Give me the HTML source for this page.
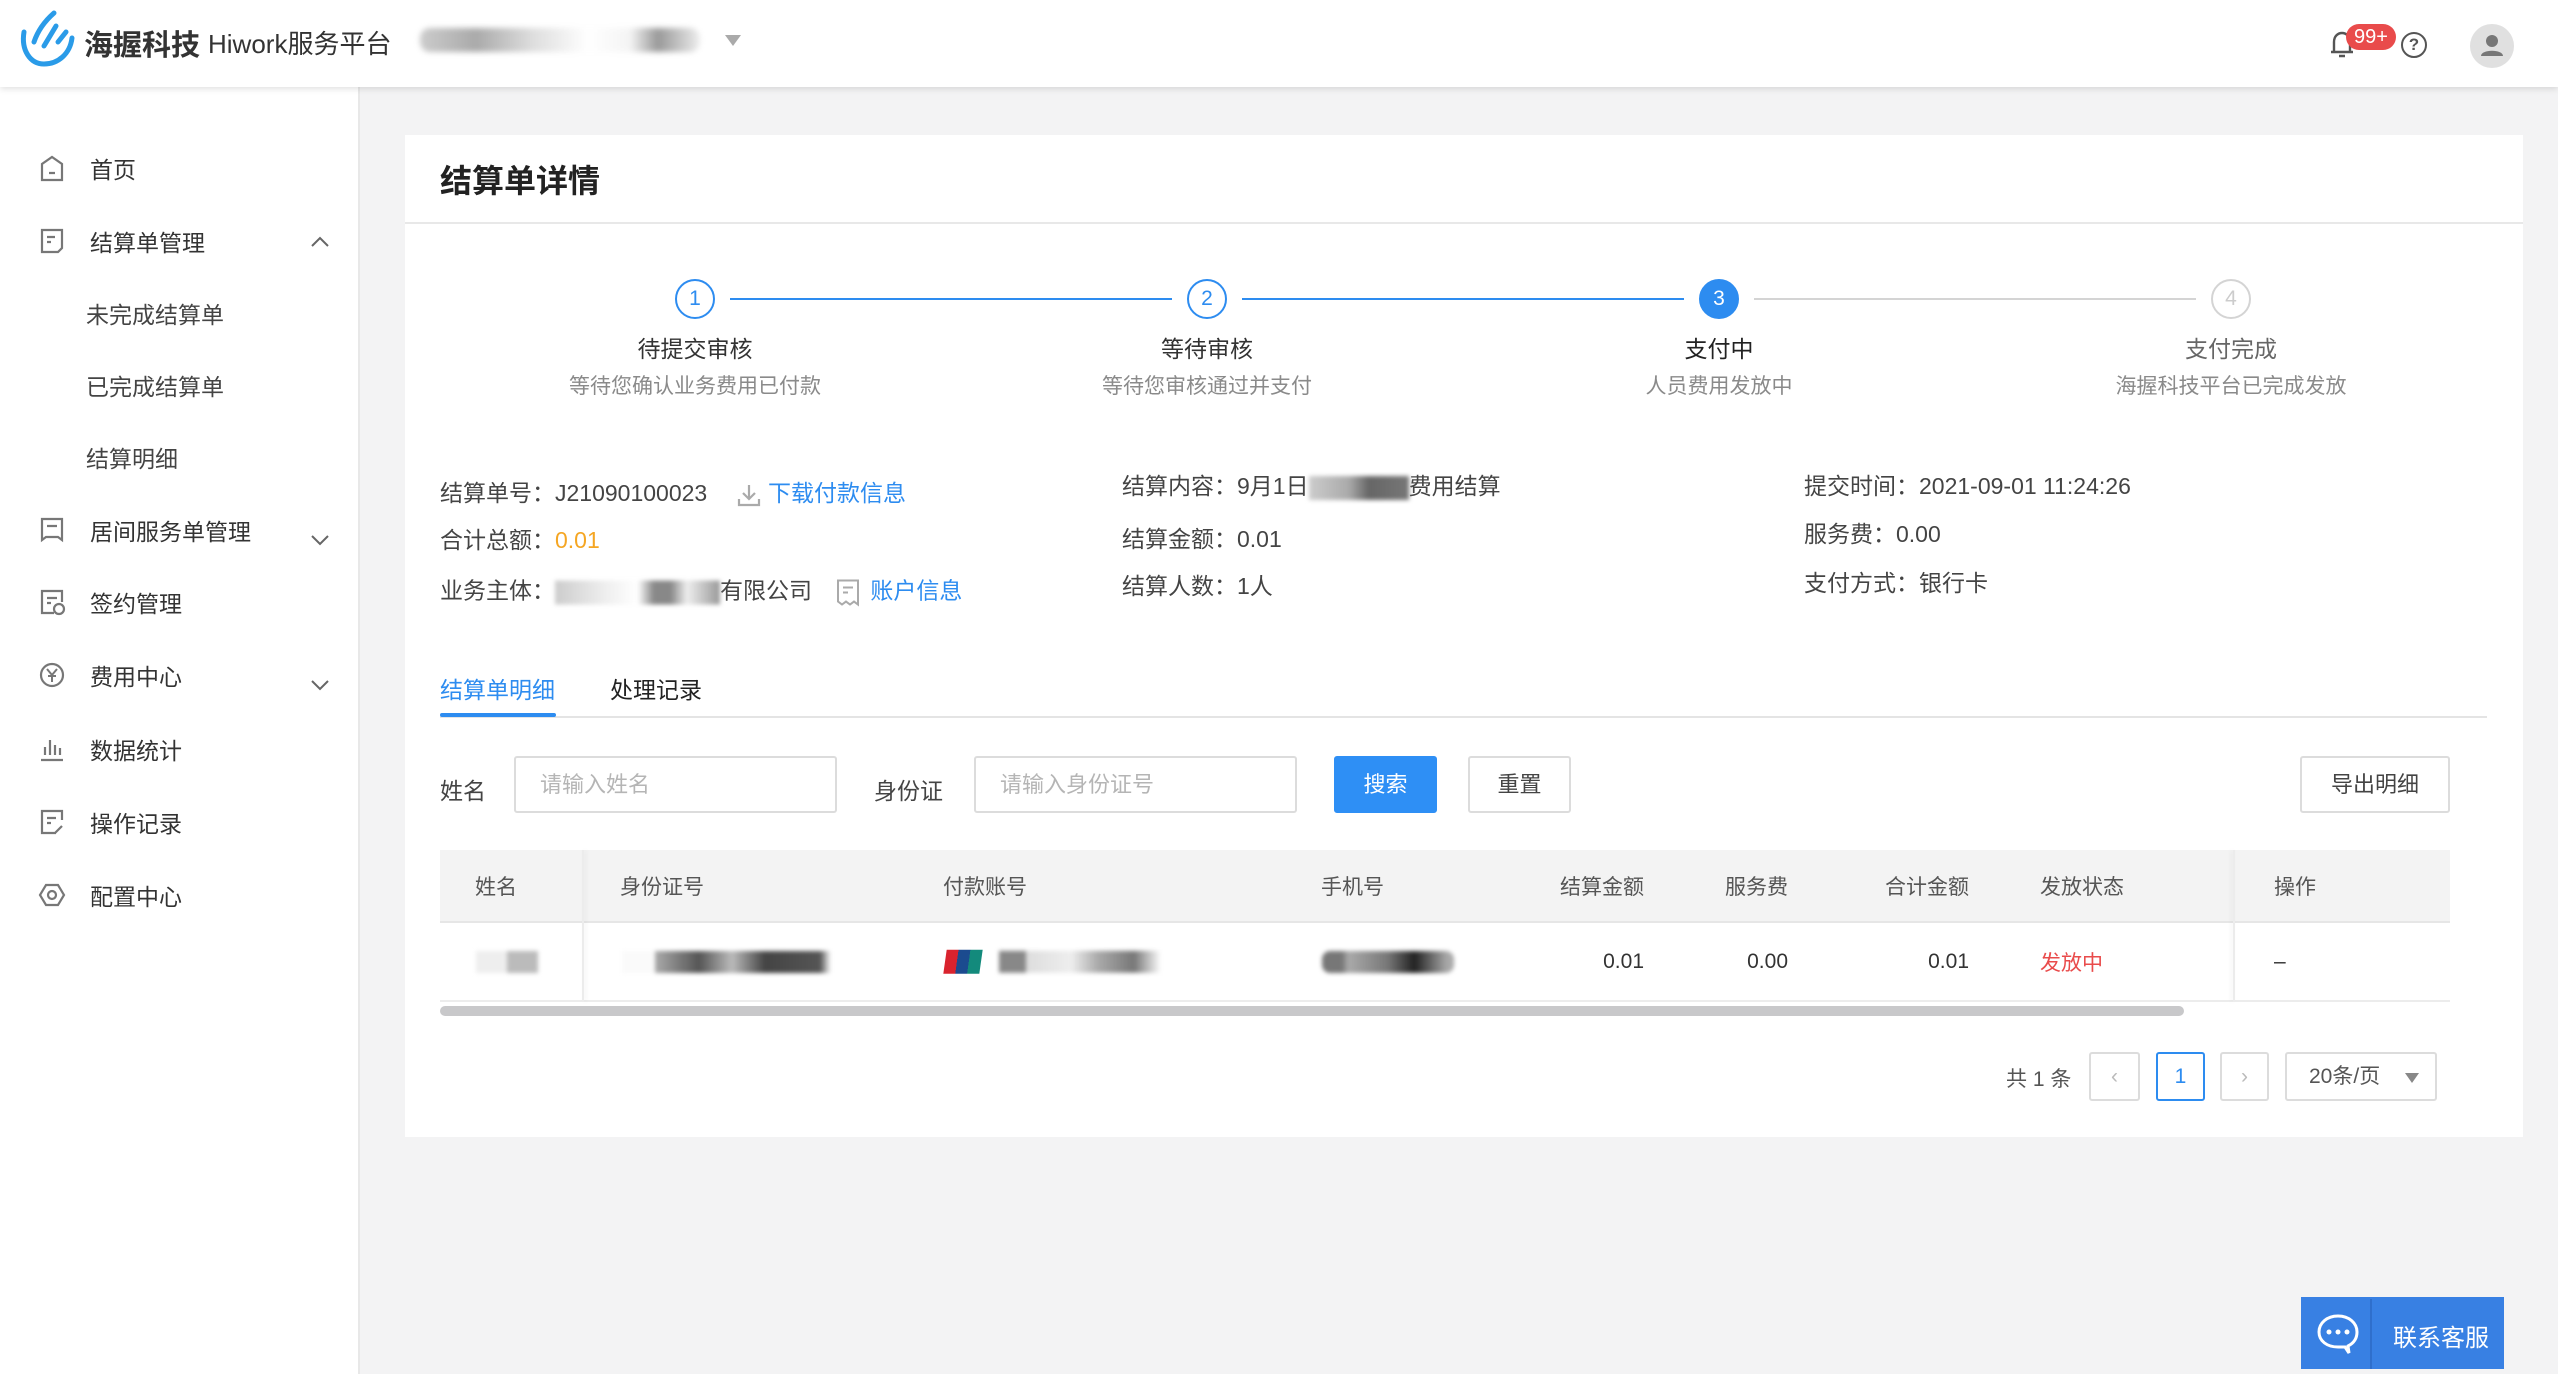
<!DOCTYPE html>
<html><head><meta charset="utf-8"><style>
*{margin:0;padding:0;box-sizing:border-box}
body{width:2558px;height:1374px;background:#f3f3f4;font-family:"Liberation Sans","Noto Sans CJK SC",sans-serif;color:#333;position:relative;overflow:hidden;font-size:23px}
.a{position:absolute;white-space:nowrap}
.hdr{position:absolute;left:0;top:0;width:2558px;height:87px;background:#fff;box-shadow:0 2px 6px rgba(0,0,0,.12);z-index:2}
.side{position:absolute;left:0;top:87px;width:360px;height:1287px;background:#fff;border-right:2px solid #e8e8e8}
.mi{position:absolute;left:90px;font-size:23px;color:#333;transform:translateY(-50%)}
.sub{left:86px;color:#444}
.ic{position:absolute;left:38px;transform:translateY(-50%)}
.card{position:absolute;left:405px;top:135px;width:2118px;height:1002px;background:#fff}
.circ{position:absolute;width:40px;height:40px;border-radius:50%;border:2px solid #2d8cf0;color:#2d8cf0;font-size:21px;text-align:center;line-height:36px;transform:translate(-50%,-50%)}
.ln{position:absolute;height:2px;background:#2d8cf0}
.st{position:absolute;transform:translateX(-50%);text-align:center;white-space:nowrap}
.st b{display:block;font-weight:normal;font-size:23px;color:#333}
.st i{display:block;font-style:normal;font-size:21px;color:#8a8a8a;margin-top:6px}
.inf{position:absolute;font-size:23px;color:#444;transform:translateY(-50%);white-space:nowrap}
.blur{display:inline-block;vertical-align:middle;filter:blur(2px)}
.inp{position:absolute;height:57px;border:2px solid #dcdcdc;border-radius:3px;color:#b5b5b5;font-size:22px;line-height:53px;padding-left:24px}
.btn{position:absolute;height:57px;border:2px solid #dcdcdc;border-radius:3px;font-size:22px;line-height:53px;text-align:center;color:#444;background:#fff}
.th{position:absolute;top:886px;transform:translateY(-50%);color:#555;font-size:21px;white-space:nowrap}
.td{position:absolute;top:962px;transform:translateY(-50%);color:#333;font-size:21px;white-space:nowrap}
.pg{position:absolute;top:1052px;height:49px;border:2px solid #dcdcdc;border-radius:3px;text-align:center;line-height:45px;color:#bbb;font-size:21px;background:#fff}
</style></head><body>
<div class="hdr">
 <svg class="a" style="left:18px;top:10px" width="58" height="58" viewBox="0 0 58 58"><path d="M6 22 C3 40 12 54 26 54 C40 54 52 44 54 28" stroke="#2a9be8" stroke-width="5" fill="none" stroke-linecap="round"/><path d="M16 32 C20 20 28 10 36 3 M26 36 L38 16 M40 32 L48 22" stroke="#2a9be8" stroke-width="5" fill="none" stroke-linecap="round"/></svg>
 <div class="a" style="left:84px;top:22px;font-size:29px;font-weight:bold;color:#333">海握科技</div>
 <div class="a" style="left:208px;top:24px;font-size:26px;color:#333">Hiwork服务平台</div>
 <div class="a" style="left:420px;top:28px;width:280px;height:24px;background:linear-gradient(90deg,#ccc,#aaa 20%,#ddd 40%,#fff 60%,#f4f4f4 75%,#999 85%,#eee);filter:blur(3px);border-radius:10px"></div>
 <div class="a" style="left:725px;top:35px;width:0;height:0;border-left:8px solid transparent;border-right:8px solid transparent;border-top:11px solid #aaa"></div>
 <svg class="a" style="left:2328px;top:28px" width="28" height="32" viewBox="0 0 28 32"><path d="M6 24 V14 C6 8 10 5 14 5 C18 5 22 8 22 14 V24 Z M3 24 H25 M11 28 H17" stroke="#555" stroke-width="2.4" fill="none"/></svg>
 <div class="a" style="left:2346px;top:24px;width:50px;height:26px;background:#e94b4b;border-radius:13px;color:#fff;font-size:20px;text-align:center;line-height:26px">99+</div>
 <div class="a" style="left:2401px;top:32px;width:26px;height:26px;border:2.5px solid #555;border-radius:50%;color:#555;font-size:17px;font-weight:bold;text-align:center;line-height:21px">?</div>
 <div class="a" style="left:2470px;top:24px;width:44px;height:44px;border-radius:50%;background:#e0e0e0"><svg width="44" height="44" viewBox="0 0 44 44"><circle cx="22" cy="17" r="6" fill="#777"/><path d="M11 32 C11 25 33 25 33 32 Z" fill="#777"/></svg></div>
</div>
<div class="side">
 <svg class="ic" style="top:81px" width="28" height="28" viewBox="0 0 28 28"><path d="M4 26 V10 L14 3 L24 10 V26 Z M11 19 H17" stroke="#777" stroke-width="2.2" fill="none"/></svg>
 <div class="mi" style="top:81px">首页</div>
 <svg class="ic" style="top:154px" width="28" height="28" viewBox="0 0 28 28"><path d="M4 3 H24 V21 L20 25 H4 Z M9 10 H17 M9 15 H13" stroke="#777" stroke-width="2.2" fill="none"/></svg>
 <div class="mi" style="top:154px">结算单管理</div>
 <svg class="a" style="left:310px;top:148px" width="20" height="14"><path d="M2 11 L10 3 L18 11" stroke="#666" stroke-width="2" fill="none"/></svg>
 <div class="mi sub" style="top:226px">未完成结算单</div>
 <div class="mi sub" style="top:298px">已完成结算单</div>
 <div class="mi sub" style="top:370px">结算明细</div>
 <svg class="ic" style="top:443px" width="28" height="28" viewBox="0 0 28 28"><path d="M4 3 H24 V24 L20 21 H8 L4 24 Z M9 10 H19" stroke="#777" stroke-width="2.2" fill="none"/></svg>
 <div class="mi" style="top:443px">居间服务单管理</div>
 <svg class="a" style="left:310px;top:446px" width="20" height="14"><path d="M2 3 L10 11 L18 3" stroke="#666" stroke-width="2" fill="none"/></svg>
 <svg class="ic" style="top:515px" width="28" height="28" viewBox="0 0 28 28"><path d="M16 25 H4 V3 H24 V14 M9 10 H19 M9 15 H13" stroke="#777" stroke-width="2.2" fill="none"/><circle cx="21" cy="21" r="5" stroke="#777" stroke-width="2.2" fill="none"/></svg>
 <div class="mi" style="top:515px">签约管理</div>
 <svg class="ic" style="top:588px" width="28" height="28" viewBox="0 0 28 28"><circle cx="14" cy="14" r="11" stroke="#777" stroke-width="2.2" fill="none"/><path d="M9 8 L14 14 L19 8 M14 14 V21 M10 15 H18" stroke="#777" stroke-width="2" fill="none"/></svg>
 <div class="mi" style="top:588px">费用中心</div>
 <svg class="a" style="left:310px;top:591px" width="20" height="14"><path d="M2 3 L10 11 L18 3" stroke="#666" stroke-width="2" fill="none"/></svg>
 <svg class="ic" style="top:662px" width="28" height="28" viewBox="0 0 28 28"><path d="M3 25 H25 M7 20 V12 M12 20 V5 M17 20 V10 M22 20 V13" stroke="#777" stroke-width="2.2" fill="none"/></svg>
 <div class="mi" style="top:662px">数据统计</div>
 <svg class="ic" style="top:735px" width="28" height="28" viewBox="0 0 28 28"><path d="M18 25 H4 V3 H24 V12 M9 10 H18 M9 15 H13 M17 25 L24 18" stroke="#777" stroke-width="2.2" fill="none"/></svg>
 <div class="mi" style="top:735px">操作记录</div>
 <svg class="ic" style="top:808px" width="28" height="28" viewBox="0 0 28 28"><path d="M8 4 H20 L26 14 L20 24 H8 L2 14 Z" stroke="#777" stroke-width="2.2" fill="none"/><circle cx="14" cy="14" r="4" stroke="#777" stroke-width="2.2" fill="none"/></svg>
 <div class="mi" style="top:808px">配置中心</div>
</div>

<div class="card"></div>
<div class="a" style="left:440px;top:156px;font-size:32px;font-weight:bold;color:#222">结算单详情</div>
<div class="a" style="left:405px;top:222px;width:2118px;height:2px;background:#e8e8e8"></div>

<div class="ln" style="left:730px;top:298px;width:442px"></div>
<div class="ln" style="left:1242px;top:298px;width:442px"></div>
<div class="ln" style="left:1754px;top:298px;width:442px;background:#d4d4d4"></div>
<div class="circ" style="left:695px;top:299px">1</div>
<div class="circ" style="left:1207px;top:299px">2</div>
<div class="circ" style="left:1719px;top:299px;background:#2d8cf0;color:#fff">3</div>
<div class="circ" style="left:2231px;top:299px;border-color:#d4d4d4;color:#ccc">4</div>
<div class="st" style="left:695px;top:330px"><b>待提交审核</b><i>等待您确认业务费用已付款</i></div>
<div class="st" style="left:1207px;top:330px"><b>等待审核</b><i>等待您审核通过并支付</i></div>
<div class="st" style="left:1719px;top:330px"><b style="color:#222">支付中</b><i>人员费用发放中</i></div>
<div class="st" style="left:2231px;top:330px"><b style="color:#666">支付完成</b><i>海握科技平台已完成发放</i></div>

<div class="inf" style="left:440px;top:491px">结算单号：J21090100023 <svg style="vertical-align:middle;margin-left:22px" width="26" height="26" viewBox="0 0 26 26"><path d="M13 3 V17 M7 11 L13 17 L19 11 M3 17 V23 H23 V17" stroke="#aaa" stroke-width="2.2" fill="none"/></svg> <span style="color:#2d8cf0">下载付款信息</span></div>
<div class="inf" style="left:440px;top:538px">合计总额：<span style="color:#f5a623">0.01</span></div>
<div class="inf" style="left:440px;top:589px">业务主体：<span class="blur" style="width:165px;height:24px;background:linear-gradient(90deg,#ccc,#eee 30%,#fff 50%,#888 60%,#888 70%,#eee 80%,#999)"></span>有限公司 <svg style="vertical-align:middle;margin:0 10px 0 18px" width="24" height="28" viewBox="0 0 24 28"><path d="M2 2 H22 V26 L18 23 L14 26 L10 23 L6 26 L2 23 Z M7 9 H17 M7 14 H12" stroke="#aaa" stroke-width="2" fill="none"/></svg><span style="color:#2d8cf0">账户信息</span></div>
<div class="inf" style="left:1122px;top:484px">结算内容：9月1日<span class="blur" style="width:100px;height:24px;background:linear-gradient(90deg,#ccc,#aaa 40%,#666 60%,#777)"></span>费用结算</div>
<div class="inf" style="left:1122px;top:537px">结算金额：0.01</div>
<div class="inf" style="left:1122px;top:584px">结算人数：1人</div>
<div class="inf" style="left:1804px;top:484px">提交时间：2021-09-01 11:24:26</div>
<div class="inf" style="left:1804px;top:532px">服务费：0.00</div>
<div class="inf" style="left:1804px;top:581px">支付方式：银行卡</div>

<div class="a" style="left:440px;top:671px;font-size:23px;color:#2d8cf0">结算单明细</div>
<div class="a" style="left:610px;top:671px;font-size:23px;color:#222">处理记录</div>
<div class="a" style="left:440px;top:716px;width:2047px;height:2px;background:#e4e4e4"></div>
<div class="a" style="left:440px;top:713px;width:116px;height:4px;background:#2d8cf0;border-radius:2px"></div>

<div class="a" style="left:440px;top:772px;font-size:23px;color:#444">姓名</div>
<div class="inp" style="left:514px;top:756px;width:323px">请输入姓名</div>
<div class="a" style="left:874px;top:772px;font-size:23px;color:#444">身份证</div>
<div class="inp" style="left:974px;top:756px;width:323px">请输入身份证号</div>
<div class="btn" style="left:1334px;top:756px;width:103px;background:#2e8ff5;border-color:#2e8ff5;color:#fff">搜索</div>
<div class="btn" style="left:1468px;top:756px;width:103px">重置</div>
<div class="btn" style="left:2300px;top:756px;width:150px">导出明细</div>

<div class="a" style="left:440px;top:850px;width:2010px;height:73px;background:#f3f3f3;border-bottom:2px solid #e6e6e6"></div>
<div class="a" style="left:440px;top:1000px;width:2010px;height:2px;background:#ececec"></div>
<div class="a" style="left:582px;top:850px;width:2px;height:152px;background:#ececec;box-shadow:2px 0 4px rgba(0,0,0,.06)"></div>
<div class="a" style="left:2233px;top:850px;width:2px;height:152px;background:#ececec;box-shadow:-2px 0 4px rgba(0,0,0,.06)"></div>
<div class="a" style="left:440px;top:1006px;width:1744px;height:10px;background:#c8c8ca;border-radius:5px"></div>
<div class="th" style="left:475px">姓名</div>
<div class="th" style="left:620px">身份证号</div>
<div class="th" style="left:943px">付款账号</div>
<div class="th" style="left:1321px">手机号</div>
<div class="th" style="left:1644px;transform:translate(-100%,-50%)">结算金额</div>
<div class="th" style="left:1788px;transform:translate(-100%,-50%)">服务费</div>
<div class="th" style="left:1969px;transform:translate(-100%,-50%)">合计金额</div>
<div class="th" style="left:2040px">发放状态</div>
<div class="th" style="left:2274px">操作</div>
<div class="td" style="left:476px"><span class="blur" style="width:62px;height:22px;background:linear-gradient(90deg,#eee 50%,#bbb 50%)"></span></div>
<div class="td" style="left:622px"><span class="blur" style="width:220px;height:22px;background:linear-gradient(90deg,#fafafa 15%,#aaa 15%,#555 35%,#bbb 50%,#444 65%,#555 90%,#fff 95%)"></span></div>
<div class="td" style="left:945px"><span style="display:inline-block;width:36px;height:24px;vertical-align:middle;background:linear-gradient(90deg,#d9232e 33%,#1b4b8f 33%,#1b4b8f 66%,#138a7c 66%);transform:skewX(-8deg);margin-right:18px"></span><span class="blur" style="width:180px;height:22px;background:linear-gradient(90deg,#888 15%,#ddd 15%,#eee 40%,#aaa 55%,#777 75%,#fff 90%)"></span></div>
<div class="td" style="left:1322px"><span class="blur" style="width:132px;height:22px;background:linear-gradient(90deg,#777 15%,#aaa 20%,#777 50%,#222 70%,#aaa 95%);border-radius:8px"></span></div>
<div class="td" style="left:1644px;transform:translate(-100%,-50%)">0.01</div>
<div class="td" style="left:1788px;transform:translate(-100%,-50%)">0.00</div>
<div class="td" style="left:1969px;transform:translate(-100%,-50%)">0.01</div>
<div class="td" style="left:2040px;color:#e94b4b">发放中</div>
<div class="td" style="left:2274px">–</div>

<div class="a" style="left:2006px;top:1063px;font-size:21px;color:#555">共 1 条</div>
<div class="pg" style="left:2089px;width:51px">‹</div>
<div class="pg" style="left:2156px;width:49px;border-color:#2d8cf0;color:#2d8cf0">1</div>
<div class="pg" style="left:2220px;width:49px">›</div>
<div class="pg" style="left:2285px;width:152px;color:#555;text-align:left;padding-left:22px">20条/页<span style="position:absolute;right:16px;top:19px;border-left:7px solid transparent;border-right:7px solid transparent;border-top:10px solid #888"></span></div>

<div class="a" style="left:2301px;top:1297px;width:203px;height:72px;background:#3880e3"></div>
<div class="a" style="left:2370px;top:1299px;width:2px;height:70px;background:#2f6fcc"></div>
<svg class="a" style="left:2315px;top:1312px" width="46" height="44" viewBox="0 0 46 44"><path d="M23 4 C12 4 4 11 4 20 C4 29 12 35 23 35 L30 35 L34 41 L33 34 C39 31 42 26 42 20 C42 11 34 4 23 4 Z" stroke="#fff" stroke-width="3" fill="none"/><circle cx="14" cy="20" r="2.5" fill="#fff"/><circle cx="23" cy="20" r="2.5" fill="#fff"/><circle cx="32" cy="20" r="2.5" fill="#fff"/></svg>
<div class="a" style="left:2393px;top:1318px;font-size:24px;color:#fff">联系客服</div>
</body></html>
